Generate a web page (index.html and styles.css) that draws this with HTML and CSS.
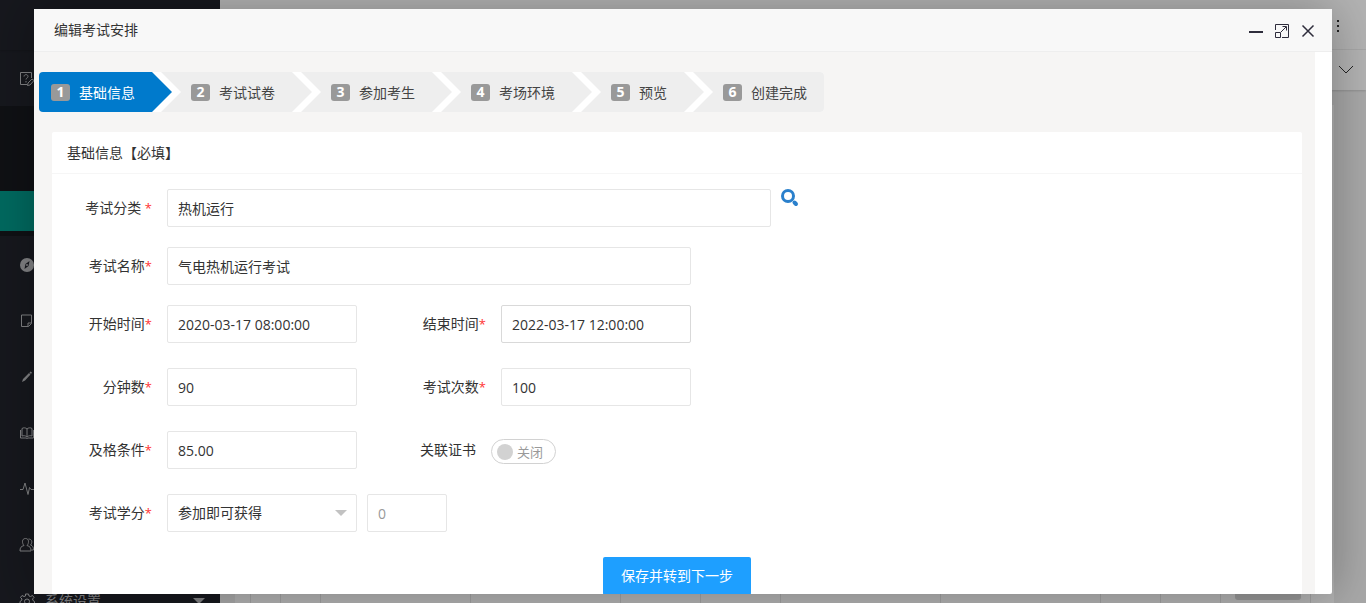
FILE: index.html
```html
<!DOCTYPE html>
<html lang="zh-CN">
<head>
<meta charset="utf-8">
<title>编辑考试安排</title>
<link rel="stylesheet" href="styles.css">
</head>
<body>
<div class="app">
  <nav class="sidebar" aria-label="主菜单">
    <div class="brand"></div>
    <a class="nav-item" href="#" aria-label="考试"><svg width="16" height="16" viewBox="0 0 16 16"><path d="M12.500 7V1.500H1.500v12H8M5 5.500c0-2.500 4-2.500 4 0 0 1.500-2 1.500-2 3M7 10v1.500M8.500 14.500l.5-2.500L13 8l2 1.500-4 4.500z"/></svg></a>
    <div class="nav-children"><a class="nav-child" href="#" aria-label="考试安排"></a></div>
    <a class="nav-item" href="#" aria-label="导航"><svg width="16" height="16" viewBox="0 0 16 16"><circle class="solid" cx="8" cy="8" r="7"/><path class="cut" d="M10.500 4L9.500 9 5.500 12l1-5z"/><circle class="solid" cx="8" cy="8" r="1"/></svg></a>
    <a class="nav-item" href="#" aria-label="文档"><svg width="16" height="16" viewBox="0 0 16 16"><path d="M2.500 2h10v8.500l-3 3h-7zM12.500 10H9v3.500"/></svg></a>
    <a class="nav-item" href="#" aria-label="编辑"><svg width="16" height="16" viewBox="0 0 16 16"><path class="solid" d="M3 13l1-3 6-6 1.500 1.500L6 11.500zM10.500 3.500l1-1 1.500 1-1 1.500z"/></svg></a>
    <a class="nav-item" href="#" aria-label="图书"><svg width="16" height="16" viewBox="0 0 16 16"><path d="M8 4v8M8 4C6.500 2.500 4.500 2.500 3 3.500V11c1.500-.5 3.500-.5 5 1 1.500-1.500 3.500-1.500 5-1V3.500C11.500 2.500 9.500 2.500 8 4M1.500 5v8H7l1 .5 1-.5h5.500V5"/></svg></a>
    <a class="nav-item" href="#" aria-label="统计"><svg width="16" height="16" viewBox="0 0 16 16"><path d="M1 8.500h3L6 2l3 11.500 1.500-7 1.500 2h3"/></svg></a>
    <a class="nav-item" href="#" aria-label="用户"><svg width="16" height="16" viewBox="0 0 16 16"><path d="M6.500 1.500c-4 0-3.500 5-1.500 7-3 1-4 2-4 5.500h11c0-3.500-1-4.500-4-5.500 2-2 2.500-7-1.500-7M9.500 2c4 0 4 4 2 6 2.500 1 3 2 3 5h-2"/></svg></a>
    <a class="nav-item" href="#"><svg width="16" height="16" viewBox="0 0 16 16"><path d="M6.500 1h3l.5 2 1.500.5 2-1 1.500 2L13.500 6l.5 1.500 1.500 1v2l-2 .5-1 1.500.5 2-2 1-1.500-1.500H7L5.500 15.500l-2-1 .5-2L3 11l-2-.5v-2l1.500-1L3 6 1.500 4.500l1.500-2 2 1L6.500 3z"/><circle cx="8" cy="8.500" r="2.500"/></svg><span>系统设置</span><i class="caret"></i></a>
  </nav>
  <div class="workspace">
    <header class="topbar"><svg width="4" height="14" viewBox="0 0 4 14"><path class="dots" d="M1 1h2v2H1zM1 6h2v2H1zM1 11h2v2H1z"/></svg></header>
    <div class="tabbar"><svg width="16" height="10" viewBox="0 0 16 10"><path d="M1 1l7 7 7-7"/></svg></div>
    <main class="page">
      <div class="list">
        <div class="list-row"><span></span><span></span><span></span><span></span><span></span><span></span><span></span><span></span><span></span><span></span><span class="cell-action"><b></b></span></div>
      </div>
    </main>
  </div>
</div>
<div class="shade"></div>
<section class="dialog" role="dialog" aria-labelledby="dialog-title">
  <header class="dialog-head">
    <h1 id="dialog-title">编辑考试安排</h1>
    <div class="dialog-tools">
      <button type="button" aria-label="最小化"><svg width="16" height="16" viewBox="0 0 16 16"><path class="thick" d="M1 9h14"/></svg></button>
      <button type="button" aria-label="最大化"><svg width="16" height="16" viewBox="0 0 16 16"><path d="M1.500 7V1.500h13v13H8M1.500 9.500h5v5h-5zM7 9l5-5M8.500 3.500h4v4"/></svg></button>
      <button type="button" aria-label="关闭"><svg width="16" height="16" viewBox="0 0 16 16"><path class="cross" d="M2.500 2.500l11 11M13.500 2.500l-11 11"/></svg></button>
    </div>
  </header>
  <div class="dialog-body">
    <ol class="steps">
      <li class="step current"><b>1</b><span>基础信息</span></li>
      <li class="step"><b>2</b><span>考试试卷</span></li>
      <li class="step"><b>3</b><span>参加考生</span></li>
      <li class="step"><b>4</b><span>考场环境</span></li>
      <li class="step"><b>5</b><span>预览</span></li>
      <li class="step"><b>6</b><span>创建完成</span></li>
    </ol>
    <form class="card">
      <h2>基础信息【必填】</h2>
      <div class="fields">
        <div class="row">
          <label for="category">考试分类 <em>*</em></label>
          <input class="wide" id="category" type="text" value="热机运行">
          <button class="search" type="button" aria-label="选择分类"><svg width="20" height="20" viewBox="0 0 20 20"><circle cx="8" cy="7" r="5.500"/><path class="neck" d="M12 11l2 2"/><path class="handle" d="M14.500 13.500l1.500 1.500"/></svg></button>
        </div>
        <div class="row">
          <label for="name">考试名称<em>*</em></label>
          <input class="medium" id="name" type="text" value="气电热机运行考试">
        </div>
        <div class="row tall">
          <label for="start">开始时间<em>*</em></label>
          <input id="start" type="text" value="2020-03-17 08:00:00">
          <label class="second" for="end">结束时间<em>*</em></label>
          <input class="hover" id="end" type="text" value="2022-03-17 12:00:00">
        </div>
        <div class="row tall">
          <label for="minutes">分钟数<em>*</em></label>
          <input id="minutes" type="text" value="90">
          <label class="second" for="times">考试次数<em>*</em></label>
          <input id="times" type="text" value="100">
        </div>
        <div class="row tall">
          <label for="pass">及格条件<em>*</em></label>
          <input id="pass" type="text" value="85.00">
          <span class="cert">关联证书</span>
          <label class="switch"><input type="checkbox" aria-label="关联证书"><i></i><span>关闭</span></label>
        </div>
        <div class="row tall">
          <label for="credit">考试学分<em>*</em></label>
          <div class="select"><select id="credit"><option>参加即可获得</option></select><i class="caret"></i></div>
          <input class="short" type="text" value="0" aria-label="学分">
        </div>
        <div class="actions"><button class="submit" type="submit">保存并转到下一步</button></div>
      </div>
    </form>
  </div>
</section>
</body>
</html>
```
FILE: styles.css
```css
* { box-sizing: border-box; }
body {
  margin: 0;
  height: 100vh;
  overflow: hidden;
  font: 14px/24px "Open Sans", "Noto Sans CJK SC", sans-serif;
  color: #333;
}
h1, h2, ol { margin: 0; padding: 0; font-size: 14px; font-weight: 400; }
button, input, select { font: inherit; color: inherit; margin: 0; }
button { border: 0; padding: 0; background: none; cursor: pointer; }
svg { display: block; flex: none; fill: none; stroke: currentColor; }
em { font-style: normal; font-size: 13px; color: #f33; }

/* Application behind the dialog */
.app { display: flex; height: 100vh; overflow: hidden; background: #f0f0f0; }
.sidebar { flex: none; width: 220px; background: #20222a; color: #b8b9bc; }
.brand { height: 50px; box-shadow: 0 1px 2px rgba(0, 0, 0, .15); }
.nav-item {
  display: flex;
  align-items: center;
  gap: 10px;
  height: 56px;
  padding: 2px 15px 0 19px;
  color: inherit;
  text-decoration: none;
}
.nav-item .caret { margin-left: auto; }
.solid { fill: currentColor; stroke: none; }
.cut { fill: #20222a; stroke: none; }
.nav-children { height: 130px; padding-top: 85px; background: #16181d; }
.nav-child { display: block; height: 40px; background: #009688; }
.caret {
  width: 0;
  border: 6px solid transparent;
  border-top-color: currentColor;
  border-bottom: 0;
}
.workspace { flex: 1; display: flex; flex-direction: column; min-width: 0; }
.topbar, .tabbar { display: flex; align-items: center; justify-content: flex-end; flex: none; background: #fff; }
.topbar { height: 50px; padding: 3px 26px 0 0; border-bottom: 1px solid #f0f0f0; color: #333; }
.dots { fill: currentColor; stroke: none; }
.tabbar { height: 40px; padding-right: 12px; color: #333; box-shadow: 0 1px 2px rgba(0, 0, 0, .15); }
.page { flex: 1; display: flex; padding: 15px 32px 0 15px; }
.list { flex: 1; display: flex; align-items: flex-end; padding: 0 23px 0 15px; background: #fff; }
.list-row { flex: 1; display: flex; height: 40px; border-left: 1px solid #e6e6e6; }
.list-row span { flex: 0 0 80px; border-right: 1px solid #e6e6e6; }
.list-row span:first-child { flex-basis: 30px; }
.list-row span:nth-child(2) { flex-basis: 40px; }
.list-row span:nth-child(3), .list-row span:nth-child(4) { flex-basis: 150px; }
.list-row span:nth-child(7), .list-row span:nth-child(8) { flex-basis: 160px; }
.list-row span:nth-child(n+9) { flex-basis: 60px; }
.list-row .cell-action { flex: 1; padding: 5px 9px 3px 14px; }
.list-row b { display: block; height: 32px; border-radius: 3px; background: #d8d8d8; }
.shade { position: fixed; inset: 0; background: rgba(0, 0, 0, .3); }

/* Dialog */
.dialog {
  position: fixed;
  inset: 9px 34px;
  display: flex;
  flex-direction: column;
  background: #fff;
  border-radius: 2px;
  box-shadow: 1px 1px 50px rgba(0, 0, 0, .3);
}
.dialog-head {
  flex: none;
  display: flex;
  align-items: center;
  justify-content: space-between;
  height: 43px;
  padding: 0 16px 0 20px;
  background: #f8f8f8;
  border-bottom: 1px solid #eee;
}
.dialog-tools { display: flex; gap: 10px; padding-top: 2px; color: #2e2d3c; }
.thick { stroke-width: 2; }
.cross { stroke-width: 1.500; }
.dialog-body {
  flex: 1;
  min-height: 0;
  overflow: hidden;
  margin-right: 17px;
  padding: 20px 13px 0 5px;
  background: #f6f5f4;
}

/* Step indicator */
.steps { display: flex; width: fit-content; list-style: none; background: #fff; border-radius: 4px; overflow: hidden; }
.step {
  display: flex;
  align-items: center;
  gap: 9px;
  height: 40px;
  margin-left: -11px;
  padding: 0 37px 0 30px;
  background: #eee;
  color: #444;
  clip-path: polygon(0 0, calc(100% - 20px) 0, 100% 50%, calc(100% - 20px) 100%, 0 100%, 20px 50%);
}
.step.current {
  margin-left: 0;
  padding-left: 12px;
  background: #007acc;
  color: #fff;
  clip-path: polygon(0 0, calc(100% - 20px) 0, 100% 50%, calc(100% - 20px) 100%, 0 100%);
}
.step:last-child { padding-right: 17px; clip-path: polygon(0 0, 100% 0, 100% 100%, 0 100%, 20px 50%); }
.step span { padding-top: 2px; }
.step b {
  width: 19px;
  height: 17px;
  border-radius: 3px;
  background: #999;
  color: #fff;
  font-weight: 700;
  line-height: 16px;
  text-align: center;
}

/* Form card */
.card { margin: 20px 0 0 13px; background: #fff; border-radius: 2px; }
.card h2 { height: 42px; padding: 0 15px; line-height: 42px; border-bottom: 1px solid #f6f6f6; }
.fields { display: flex; flex-direction: column; gap: 20px; padding: 15px; }
.row { display: flex; }
.row.tall { margin-bottom: 5px; }
.row label, .cert { flex: none; width: 85px; line-height: 38px; text-align: right; }
.row label { margin-right: 15px; }
.row .second { width: 129px; }
.row input, .select select {
  width: 190px;
  height: 38px;
  padding: 0 10px;
  background: #fff;
  border: 1px solid #e6e6e6;
  border-radius: 2px;
  outline: 0;
}
.row .wide { width: 604px; }
.row .medium { width: 524px; }
.row .short { width: 80px; margin-left: 10px; color: #999; }
.row .hover { border-color: #d9d9d9; }
.search { align-self: flex-start; margin-left: 9px; color: #2a80cc; }
.search svg { stroke-width: 3; }
.search .neck { stroke-width: 1; }
.search .handle { stroke-width: 4; stroke-linecap: round; }
.cert { width: 119px; }
.row .switch {
  display: flex;
  align-items: center;
  gap: 4px;
  width: 65px;
  height: 25px;
  margin: 8px 0 0 15px;
  padding: 0 5px;
  border: 1px solid #d2d2d2;
  border-radius: 20px;
  color: #999;
  font-size: 13px;
  line-height: 24px;
}
.switch input { position: absolute; width: 1px; height: 1px; opacity: 0; }
.switch i { width: 16px; height: 16px; border-radius: 50%; background: #d2d2d2; }
.select { position: relative; }
.select select { appearance: none; }
.select .caret { position: absolute; right: 10px; top: 16px; color: #c2c2c2; }
.actions { display: flex; justify-content: center; }
.submit { height: 38px; padding: 0 18px; border-radius: 2px; background: #1e9fff; color: #fff; }
```
